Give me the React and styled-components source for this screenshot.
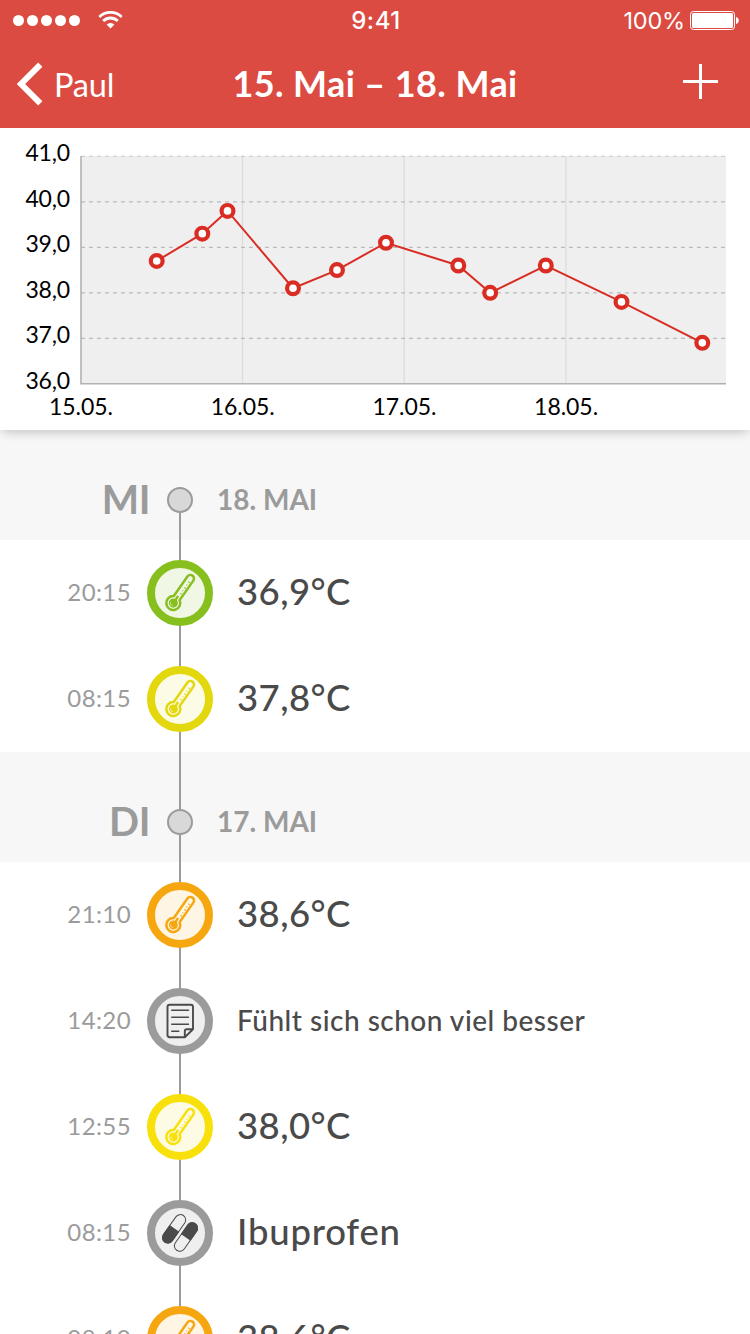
import React from "react";
import styled, { createGlobalStyle } from "styled-components";

const GlobalStyle = createGlobalStyle`
    * {
        box-sizing: border-box;
    }

    body {
        margin: 0;
        background: #fff;
        font-family: Lato, "Open Sans", sans-serif;
    }
`;

const Screen = styled.div`
    width: 750px;
    height: 1334px;
    overflow: hidden;
    background: #fff;
`;

const Header = styled.header`
    position: relative;
    z-index: 1;
    height: 128px;
    background: #db4b42;
    color: #fff;
`;

const StatusBar = styled.div`
    height: 40px;
    padding: 0 11px 0 13px;
    display: grid;
    grid-template-columns: 1fr auto 1fr;
    align-items: center;
    font-family: Inter, "Liberation Sans", sans-serif;
    font-size: 24px;
`;

const Signal = styled.div`
    display: flex;
    align-items: center;
    gap: 3px;
`;

const SignalDot = styled.span`
    width: 11px;
    height: 11px;
    border-radius: 50%;
    background: #fff;
`;

const WifiIcon = styled.svg`
    margin-left: 15px;
`;

const Clock = styled.span`
    font-size: 24px;
    font-weight: 500;
    letter-spacing: 0.5px;
`;

const Battery = styled.div`
    display: flex;
    justify-content: flex-end;
    align-items: center;
    gap: 5px;
    font-size: 23.5px;
    letter-spacing: -0.2px;
`;

const NavBar = styled.nav`
    height: 88px;
    padding: 0 32px 0 17px;
    display: grid;
    grid-template-columns: 209px 1fr 209px;
    align-items: center;
`;

const BackButton = styled.div`
    display: flex;
    align-items: center;
    gap: 11px;
    font-size: 32.5px;
    letter-spacing: -0.2px;
`;

const Title = styled.h1`
    margin: 0 -10px 3px 5px;
    font-size: 36px;
    font-weight: 700;
    letter-spacing: 0.4px;
    text-align: center;
    white-space: nowrap;
`;

const AddButton = styled.div`
    display: flex;
    justify-content: flex-end;
    margin-bottom: 5px;
`;

const ChartPanel = styled.section`
    position: relative;
    height: 302px;
    background: #fff;
    box-shadow: 0 4px 10px -2px rgba(0, 0, 0, 0.22);
`;

const ChartLabel = styled.text`
    font-size: 23px;
    fill: #000;
`;

const DayHeader = styled.div`
    height: 110px;
    padding-top: 30px;
    display: flex;
    align-items: center;
    background: #f7f7f7;
    color: #9b9b9b;
    font-weight: 700;
`;

const Weekday = styled.div`
    width: 150px;
    margin-right: 17px;
    padding-bottom: 3px;
    text-align: right;
    font-size: 39.5px;
    letter-spacing: -0.4px;
`;

const DayDate = styled.div`
    margin-left: 24px;
    padding-bottom: 2px;
    font-size: 28px;
`;

const DayDot = styled.div`
    position: relative;
    width: 26px;
    height: 26px;
    border: 2px solid #9b9b9b;
    border-radius: 50%;
    background: #d8d8d8;

    &::before {
        content: "";
        position: absolute;
        left: 10px;
        top: 24px;
        width: 2px;
        height: 28px;
        background: #9b9b9b;
    }

    &::after {
        content: "";
        position: absolute;
        display: ${props => props.$first ? "none" : "block"};
        left: 10px;
        bottom: 24px;
        width: 2px;
        height: 57px;
        background: #9b9b9b;
    }
`;

const Row = styled.div`
    height: 106px;
    display: flex;
    align-items: center;
`;

const Time = styled.div`
    width: 131px;
    margin-right: 16px;
    padding-bottom: 3px;
    text-align: right;
    font-size: 24px;
    letter-spacing: 0.4px;
    color: #9b9b9b;
`;

const Rail = styled.div`
    height: 106px;
    display: flex;
    align-items: center;
    background: linear-gradient(#9b9b9b, #9b9b9b) center / 2px 100% no-repeat;
`;

const Badge = styled.div`
    width: 66px;
    height: 66px;
    border: 8px solid ${props => props.$color};
    border-radius: 50%;
    background: ${props => props.$fill};
    color: ${props => props.$color};

    svg {
        display: block;
    }
`;

const Entry = styled.div`
    margin-left: 24px;
    padding-bottom: ${props => props.$note ? "2px" : "4px"};
    font-size: ${props => props.$note ? "28px" : "36.5px"};
    font-weight: 500;
    letter-spacing: ${props => props.$spacing}px;
    color: #4a4a4a;
    white-space: nowrap;
`;

const LEVELS = {
    green: { color: "#87bf1e", fill: "#f1f7e5" },
    lime: { color: "#e3d80e", fill: "#fcfbe5" },
    yellow: { color: "#f8e10a", fill: "#fefbe4" },
    orange: { color: "#f6a70f", fill: "#fef5e5" },
    grey: { color: "#9b9b9b", fill: "#efefef" },
};

const DAYS = [
    {
        weekday: "MI",
        date: "18. MAI",
        entries: [
            { time: "20:15", level: "green", text: "36,9°C" },
            { time: "08:15", level: "lime", text: "37,8°C" },
        ],
    },
    {
        weekday: "DI",
        date: "17. MAI",
        entries: [
            { time: "21:10", level: "orange", text: "38,6°C" },
            { time: "14:20", level: "grey", icon: "note", text: "Fühlt sich schon viel besser" },
            { time: "12:55", level: "yellow", text: "38,0°C" },
            { time: "08:15", level: "grey", icon: "pills", text: "Ibuprofen" },
            { time: "08:10", level: "orange", text: "38,6°C" },
        ],
    },
];

// x position in the chart, temperature
const POINTS = [
    [156.7, 38.7], [202.3, 39.3], [227.5, 39.8], [293, 38.1], [337, 38.5], [386, 39.1],
    [458.3, 38.6], [490.2, 38], [545.8, 38.6], [621.5, 37.8], [702.3, 36.9],
];

const tempToY = temp => 28.3 + (41 - temp) * 45.5;

const Chart = () => (
    <svg width="750" height="302" viewBox="0 0 750 302" display="block">
        <rect x="81" y="28" width="645" height="228" fill="#efefef"/>
        {[242.5, 404.2, 565.9].map(x => (
            <line key={x} x1={x} x2={x} y1="28" y2="256" stroke="#dcdcdc" strokeWidth="1.3"/>
        ))}
        {[41, 40, 39, 38, 37].map(temp => (
            <line key={temp} x1="81" x2="726" y1={tempToY(temp)} y2={tempToY(temp)} stroke={temp === 41 ? "#cfcfcf" : "#bbb"} strokeWidth="1.2" strokeDasharray="4 4"/>
        ))}
        <path d="M81 28V255.8H726" fill="none" stroke="#b2b2b2" strokeWidth="1.6"/>
        {[41, 40, 39, 38, 37, 36].map(temp => (
            <ChartLabel key={temp} x="25.5" y={tempToY(temp) + 5} textLength="44.5">{temp},0</ChartLabel>
        ))}
        {[15, 16, 17, 18].map((day, i) => (
            <ChartLabel key={day} x={49 + i * 161.7} y="286.5" textLength="64">{day}.05.</ChartLabel>
        ))}
        <polyline points={POINTS.map(([x, temp]) => `${x},${tempToY(temp)}`).join(" ")} fill="none" stroke="#d92d24" strokeWidth="2"/>
        {POINTS.map(([x, temp]) => (
            <circle key={x} cx={x} cy={tempToY(temp)} r="5.9" fill="#fff" stroke="#d92d24" strokeWidth="4.2"/>
        ))}
    </svg>
);

const Thermometer = () => (
    <svg width="50" height="50" viewBox="-25 -25 50 50">
        <g transform="translate(-6.7 10) rotate(35)">
            <path d="M-3.6 -6V-29.8a3.6 3.6 0 0 1 7.2 0V-6A7 7 0 1 1 -3.6 -6Z" fill="none" stroke="currentColor" strokeWidth="2.5"/>
            <path d="M-1.2 -4.4V-8.5H1.2V-4.4A4.5 4.5 0 1 1 -1.2 -4.4Z" fill="currentColor"/>
            <path d="M-2.7 .9A2.9 2.9 0 0 0 1.2 2.6" fill="none" stroke="#fff" strokeOpacity=".6" strokeWidth=".8"/>
            <path d="M.2 -12H1.8M.2 -15.5H1.2M.2 -19H1.8M.2 -22.5H1.2M.2 -26H1.8" stroke="currentColor" strokeWidth="1.2"/>
        </g>
    </svg>
);

const Note = () => (
    <svg width="50" height="50" viewBox="-25 -25 50 50" fill="none" stroke="#4a4a4a" strokeLinejoin="round" strokeLinecap="round">
        <path d="M4.5 16.2H-10.3a2.2 2.2 0 0 1 -2.2 -2.2V-14a2.2 2.2 0 0 1 2.2 -2.2H10.8a2.2 2.2 0 0 1 2.2 2.2V8.3L4.8 16.2V10.3a2 2 0 0 1 2 -2H13" strokeWidth="1.9"/>
        <path d="M-8.3 -10.7H8.5M-8.3 -3.7H8.5M-8.3 3.3H8.5M-8.3 10.3H-1.2" strokeWidth="1.4"/>
    </svg>
);

const Pills = () => (
    <svg width="50" height="50" viewBox="-25 -25 50 50" fill="none" stroke="#4a4a4a">
        <g transform="translate(-5.9 -4.2) rotate(35)">
            <rect x="-5.4" y="-16.2" width="10.8" height="32.4" rx="5.4"/>
            <path d="M-5.4 0H5.4V10.8a5.4 5.4 0 0 1 -10.8 0Z" fill="#4a4a4a"/>
        </g>
        <g transform="translate(6 4) rotate(35)">
            <rect x="-5.4" y="-16.2" width="10.8" height="32.4" rx="5.4"/>
            <path d="M-5.4 0H5.4V-10.8a5.4 5.4 0 0 0 -10.8 0Z" fill="#4a4a4a"/>
        </g>
    </svg>
);

const ICONS = { note: Note, pills: Pills };

const TimelineRow = ({ entry }) => {
    const Icon = ICONS[entry.icon] || Thermometer;
    const level = LEVELS[entry.level];
    const spacing = { note: 0.5, pills: 0.8 }[entry.icon] || 0.4;

    return (
        <Row>
            <Time>{entry.time}</Time>
            <Rail>
                <Badge $color={level.color} $fill={level.fill}><Icon/></Badge>
            </Rail>
            <Entry $note={entry.icon === "note"} $spacing={spacing}>{entry.text}</Entry>
        </Row>
    );
};

const App = () => (
    <Screen>
        <GlobalStyle/>
        <Header>
            <StatusBar>
                <Signal>
                    {[0, 1, 2, 3, 4].map(i => <SignalDot key={i}/>)}
                    <WifiIcon width="25" height="18" viewBox="0 0 25 18" fill="none" stroke="#fff" strokeWidth="2.8">
                        <path d="M1.3 5.9A16 16 0 0 1 23.7 5.9"/>
                        <path d="M5.2 10A10.4 10.4 0 0 1 19.8 10"/>
                        <path d="M8.6 13.6A5.6 5.6 0 0 1 16.4 13.6L12.5 17.6Z" fill="#fff" stroke="none"/>
                    </WifiIcon>
                </Signal>
                <Clock>9:41</Clock>
                <Battery>
                    100%
                    <svg width="49" height="19" viewBox="0 0 49 19">
                        <rect x=".5" y=".5" width="44" height="18" rx="3" fill="none" stroke="#fff"/>
                        <rect x="2" y="2" width="41" height="15" rx="1.6" fill="#fff"/>
                        <path d="M46 6a3.6 3.6 0 0 1 0 7Z" fill="#fff"/>
                    </svg>
                </Battery>
            </StatusBar>
            <NavBar>
                <BackButton>
                    <svg width="26" height="44" viewBox="0 0 26 44" fill="none" stroke="#fff" strokeWidth="6">
                        <path d="M23.3 2.7L4 22L23.3 41.3"/>
                    </svg>
                    Paul
                </BackButton>
                <Title>15. Mai – 18. Mai</Title>
                <AddButton>
                    <svg width="35" height="35" viewBox="0 0 35 35" stroke="#fff" strokeWidth="3">
                        <path d="M0 17.5H35M17.5 0V35"/>
                    </svg>
                </AddButton>
            </NavBar>
        </Header>
        <ChartPanel>
            <Chart/>
        </ChartPanel>
        {DAYS.map((day, i) => (
            <section key={day.date}>
                <DayHeader>
                    <Weekday>{day.weekday}</Weekday>
                    <DayDot $first={i === 0}/>
                    <DayDate>{day.date}</DayDate>
                </DayHeader>
                {day.entries.map((entry, j) => <TimelineRow key={j} entry={entry}/>)}
            </section>
        ))}
    </Screen>
);

export default App;
